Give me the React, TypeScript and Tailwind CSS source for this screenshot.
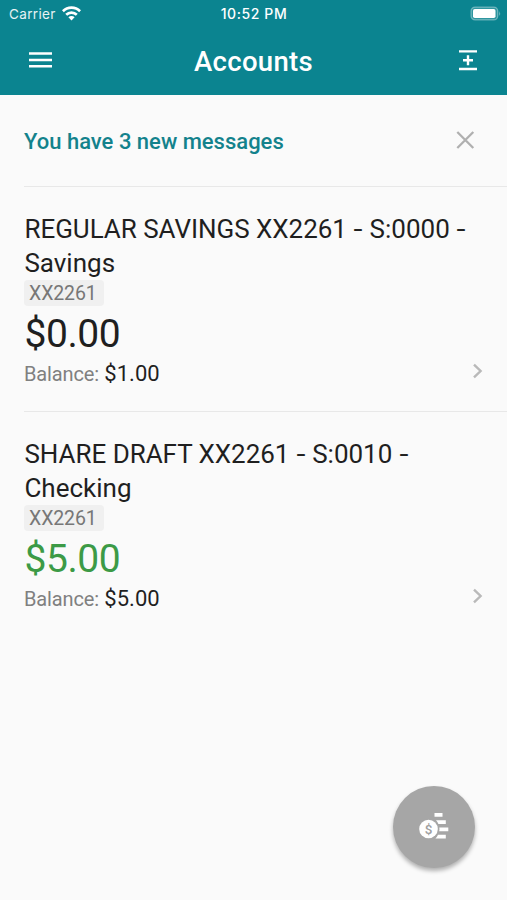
import React from "react";

interface Account {
  name: string[];
  mask: string;
  available: string;
  balance: string;
  positive?: boolean;
}

const accounts: Account[] = [
  { name: ["REGULAR SAVINGS XX2261", "S:0000", "Savings"], mask: "XX2261", available: "$0.00", balance: "$1.00" },
  { name: ["SHARE DRAFT XX2261", "S:0010", "Checking"], mask: "XX2261", available: "$5.00", balance: "$5.00", positive: true },
];

function StatusBar() {
  return (
    <div className="grid h-7 grid-cols-3 items-center pl-[9px] pr-[6px] font-[Inter,sans-serif] text-[13.5px] leading-7">
      <div className="flex items-center gap-[6px]">
        <span className="tracking-[0.35px] text-white/90">Carrier</span>
        <svg width="19" height="15" viewBox="0 0 19 15" fill="none" stroke="white" strokeWidth="2.7" className="-mt-px">
          <path d="M.9 5.2a12.2 12.2 0 0 1 17.2 0" />
          <path d="M4.2 8.7a7.6 7.6 0 0 1 10.6 0" />
          <path d="M9.5 14.4 6.4 11.2a4.4 4.4 0 0 1 6.2 0Z" fill="white" stroke="none" />
        </svg>
      </div>
      <div className="-ml-0.5 whitespace-nowrap text-center text-[14px] font-medium tracking-[0.6px]">10:52 PM</div>
      <div className="flex justify-end">
        <svg width="31" height="15" viewBox="0 0 31 15" className="-mt-px">
          <rect x="1.1" y="1.1" width="26.6" height="12.8" rx="4" fill="white" fillOpacity=".15" stroke="white" strokeOpacity=".35" strokeWidth="1.3" />
          <rect x="3" y="3" width="22.5" height="9" rx="1.8" fill="white" />
          <path d="M29.3 5v5q1.6-2.5 0-5" fill="white" fillOpacity=".5" />
        </svg>
      </div>
    </div>
  );
}

function Header() {
  return (
    <header className="h-[95px] bg-[#0b8490] text-white">
      <StatusBar />
      <div className="flex h-[67px] items-center justify-between pl-[29px] pr-[30px]">
        <svg width="23" height="16" viewBox="0 0 23 16" fill="white" className="-mt-1">
          <path d="M0 .3h23v2.5H0zM0 6.7h23v2.5H0zM0 13h23v2.5H0z" />
        </svg>
        <h1 className="-ml-1 text-[27.5px] font-medium leading-8 tracking-[0.3px]">Accounts</h1>
        <svg width="18" height="21" viewBox="0 0 18 21" fill="white" className="-mt-[3px]">
          <path d="M0 .2h18v2.4H0zM0 17.8h18v2.4H0zM7.8 5.2h2.4v3.8H14v2.4h-3.8v3.8H7.8v-3.8H4V9h3.8z" />
        </svg>
      </div>
    </header>
  );
}

/** Hyphen between the parts of an account name, slightly wider than the font's own. */
function Dash() {
  return <span className="inline-block scale-x-[1.25] px-[1.3px]">-</span>;
}

function AccountRow({ account, divided }: { account: Account; divided: boolean }) {
  const [title, suffix, kind] = account.name;
  return (
    <section className={`ml-6 h-[225px] pt-[25px] ${divided ? "border-b border-[#e8e8e8]" : ""}`}>
      <h2 className="w-[470px] pl-[0.4px] text-[26px] leading-[34px]">
        <span className="tracking-[-0.03px]">{title}</span> <Dash /> {suffix} <Dash />
        <br />
        {kind}
      </h2>
      <div className="flex h-[26px] w-20 items-center rounded bg-[#f0f0f0] pl-[5px] pt-0.5 text-[19.5px] tracking-[-0.1px] text-[#777]">
        {account.mask}
      </div>
      <div className={`h-[50px] pl-[0.6px] text-[39px] leading-[56px] tracking-[-0.5px] ${account.positive ? "text-[#3c9a46]" : ""}`}>
        {account.available}
      </div>
      <div className="flex items-center justify-between pr-6">
        <div className="flex items-baseline gap-[5.5px] leading-9">
          <span className="text-[20px] tracking-[-0.15px] text-[#808080]">Balance:</span>
          <span className="text-[22px]">{account.balance}</span>
        </div>
        <svg width="10" height="16" viewBox="0 0 10 16" fill="none" stroke="#b9b9b9" strokeWidth="2.4" className="-mt-[6px]">
          <path d="m1 1.6 6.6 6.4L1 14.4" />
        </svg>
      </div>
    </section>
  );
}

export default function App() {
  return (
    <main className="relative h-[900px] w-[507px] overflow-hidden bg-[#fafafa] font-[Roboto,sans-serif] text-[#1f1f1f]">
      <Header />
      <div className="ml-6 flex h-[92px] items-center justify-between border-b border-[#e8e8e8] pr-8">
        <p className="pt-0.5 text-[22px] font-medium text-[#13828c]">You have 3 new messages</p>
        <svg width="19" height="18" viewBox="0 0 19 18" fill="none" stroke="#b0b0b0" strokeWidth="2.3" className="-mt-px">
          <path d="m1.3 1 16 16m0-16-16 16" />
        </svg>
      </div>
      {accounts.map((a, i) => (
        <AccountRow key={a.name[0]} account={a} divided={i < accounts.length - 1} />
      ))}
      <button className="absolute left-[393px] top-[786px] flex size-[82px] items-center justify-center rounded-full bg-[#a6a6a6] shadow-[0_3px_4px_rgba(0,0,0,0.3)]">
        <svg width="30" height="28" viewBox="0 0 30 28" fill="white" className="-mt-0.5">
          <path d="M15.5 1h8v3.8h-8zM17 8.3h9.8v3.8h-7.4q-.8-2.4-2.4-3.8M20.3 15.5h9v3.8h-9.1q.5-1.8.1-3.8M19 22.8h7.8v3.6H16.4q1.7-1.3 2.6-3.6" />
          <circle cx="9.5" cy="17" r="9.3" />
          <text x="9.5" y="21.7" textAnchor="middle" fontSize="13.5" fontWeight="500" fill="#a0a0a0">$</text>
        </svg>
      </button>
    </main>
  );
}
